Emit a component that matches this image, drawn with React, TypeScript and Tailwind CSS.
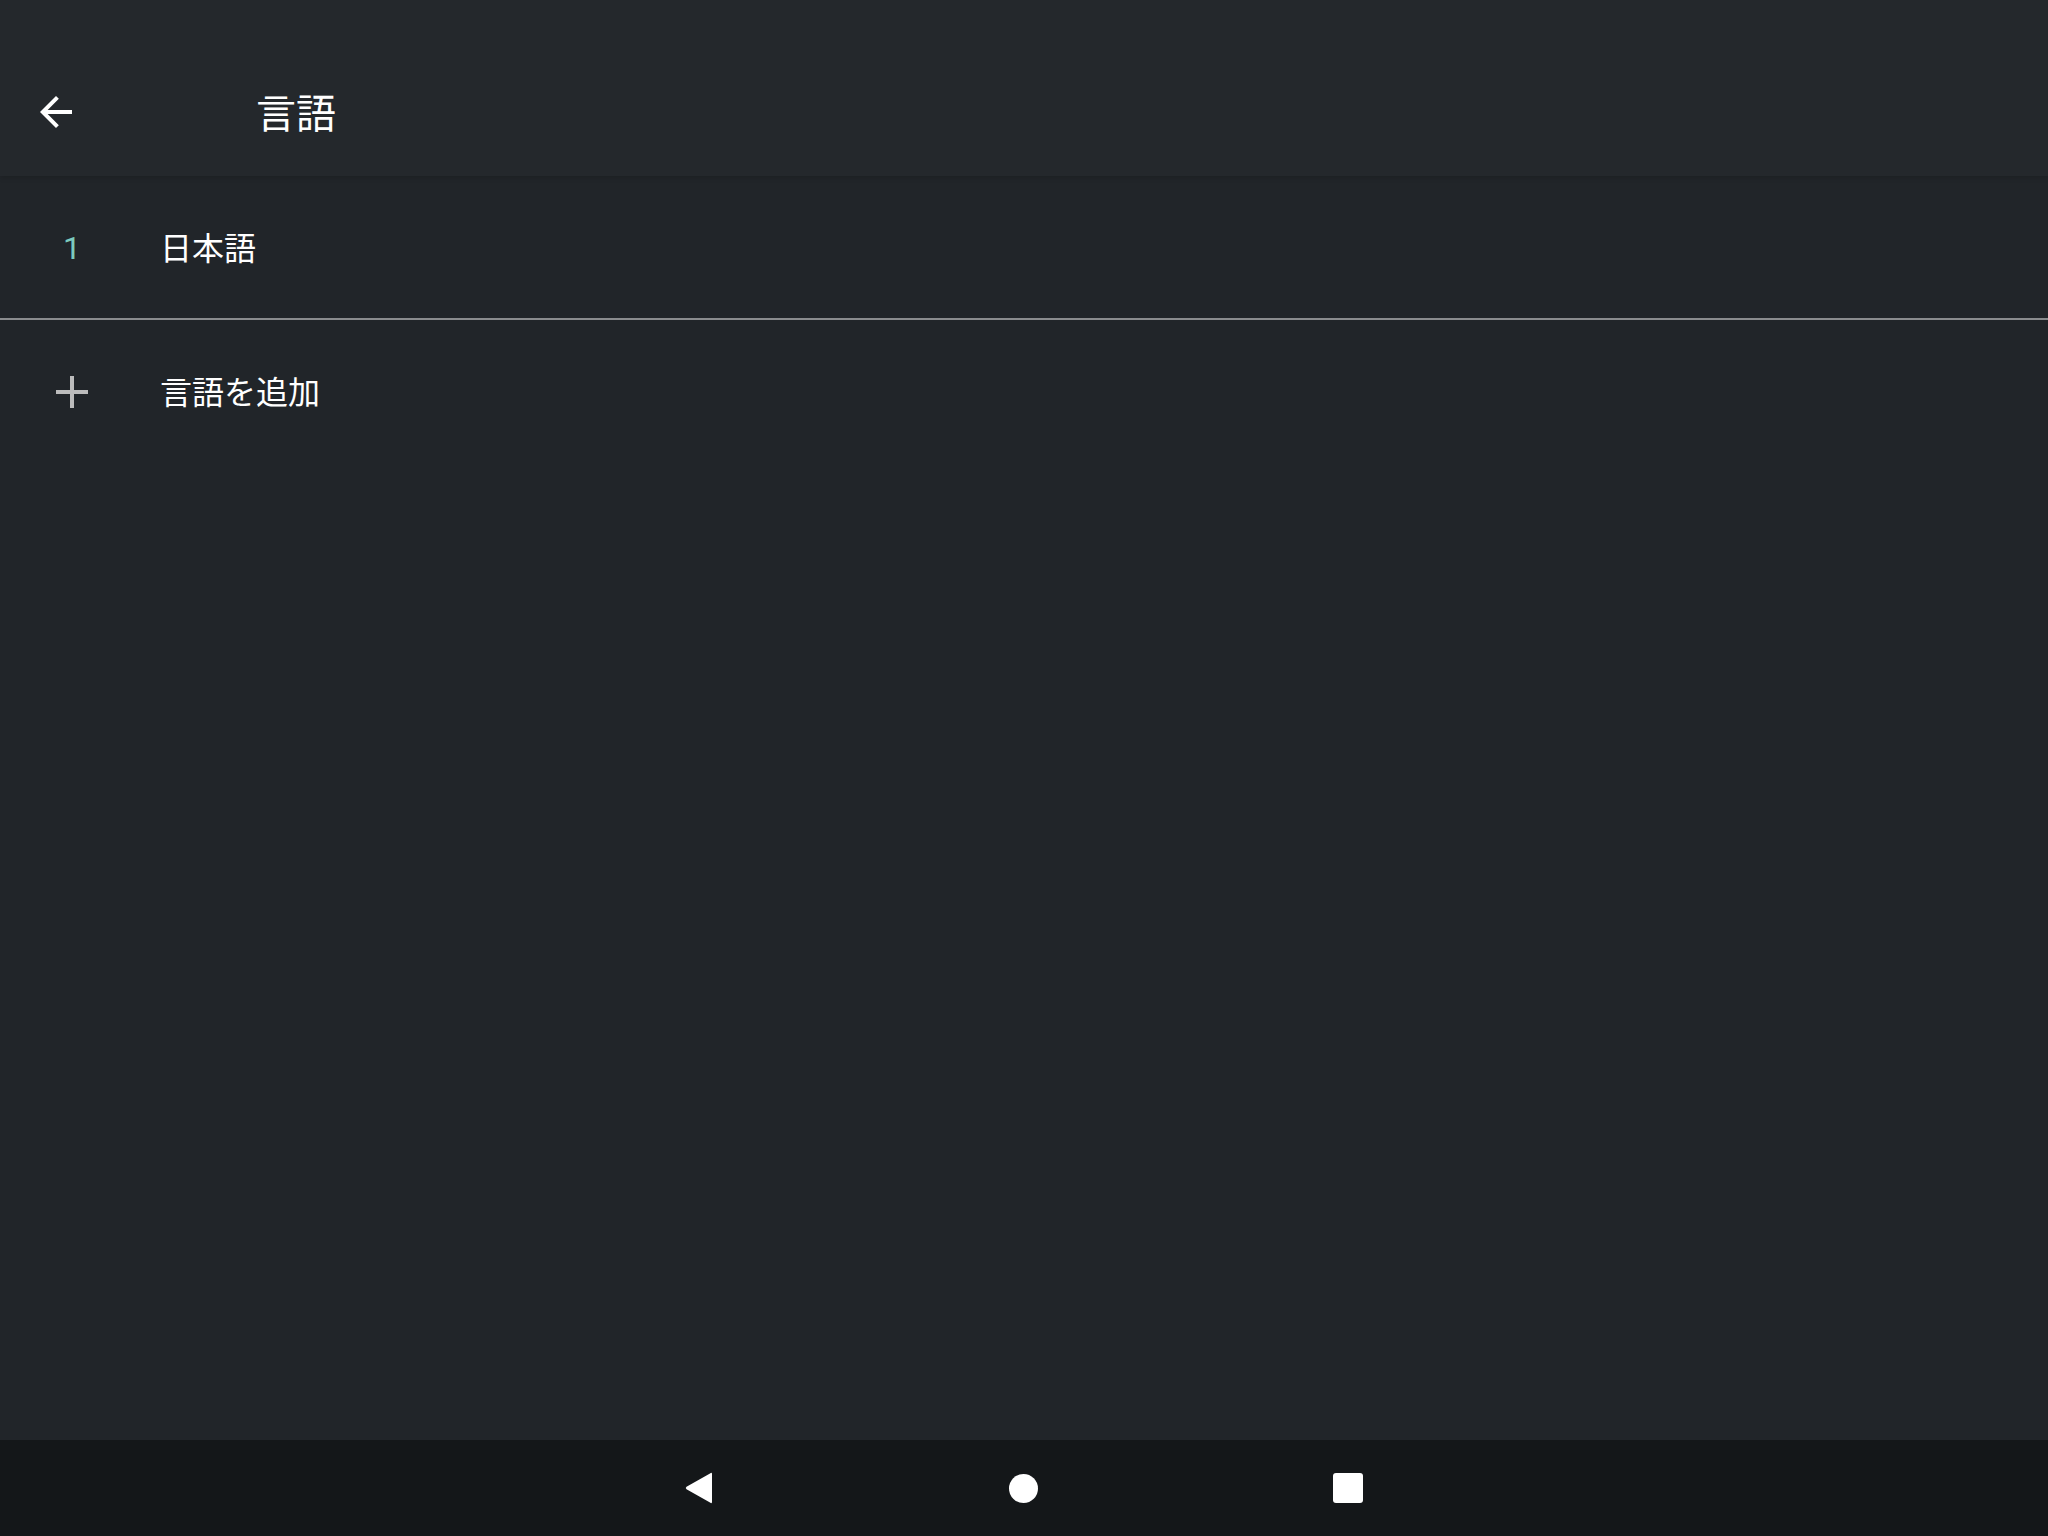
import React from 'react';

const jp = "font-['Noto_Sans_CJK_JP','Noto_Sans',sans-serif]";

function BackArrow() {
  return (
    <svg viewBox="0 0 24 24" className="w-[48px] h-[48px]" fill="#ffffff">
      <path d="M20 11H7.83l5.59-5.59L12 4l-8 8 8 8 1.41-1.41L7.83 13H20v-2z" />
    </svg>
  );
}

function PlusIcon() {
  return (
    <svg viewBox="0 0 32 32" className="w-[32px] h-[32px]">
      <rect x="0" y="14" width="32" height="4" fill="#bcbcbc" />
      <rect x="14" y="0" width="4" height="32" fill="#bcbcbc" />
    </svg>
  );
}

function NavBar() {
  return (
    <div className="h-[96px] bg-[#141719] flex items-center justify-center">
      <div className="flex items-center gap-[295px] mr-[2px]">
        <svg viewBox="0 0 30 32" className="w-[30px] h-[32px]">
          <path d="M28 2 L28 30 Q28 32 26 30.5 L2.5 17.2 Q1 16 2.5 14.8 L26 1.5 Q28 0 28 2 Z" fill="#ffffff" />
        </svg>
        <div className="w-[29px] h-[29px] rounded-full bg-white" />
        <div className="w-[30px] h-[30px] rounded-[3px] bg-white" />
      </div>
    </div>
  );
}

export default function App() {
  return (
    <div className="w-[2048px] h-[1536px] flex flex-col bg-[#212529] overflow-hidden">
      <header className="h-[176px] pt-[48px] bg-[#24282c] shadow-[0_2px_5px_rgba(0,0,0,0.14)] relative z-10">
        <div className="h-[128px] flex items-center pl-[32px]">
          <BackArrow />
          <span className={`${jp} ml-[176px] mb-[2px] text-[40px] leading-none text-white`}>言語</span>
        </div>
      </header>

      <main className="flex-1">
        <div className="h-[142px] flex items-center pl-[48px]">
          <div className="w-[48px] flex justify-center mt-[2px]">
            <span className="font-['Roboto',sans-serif] text-[32px] leading-none text-[#7ccbbf]">1</span>
          </div>
          <span className={`${jp} ml-[64px] mb-[2px] text-[32px] leading-none text-white`}>日本語</span>
        </div>
        <div className="h-[2px] bg-[#8a8c8e]" />
        <div className="h-[144px] flex items-center pl-[48px]">
          <div className="w-[48px] flex justify-center">
            <PlusIcon />
          </div>
          <span className={`${jp} ml-[64px] mb-[4px] text-[32px] leading-none text-white`}>言語を追加</span>
        </div>
      </main>

      <NavBar />
    </div>
  );
}
